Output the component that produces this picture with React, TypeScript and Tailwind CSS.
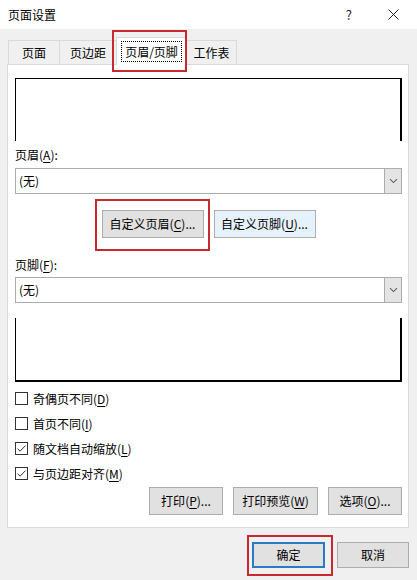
import React from "react";

const font = { fontFamily: '"Noto Sans CJK SC", "Noto Sans", sans-serif' };

function Key({ k }: { k: string }) {
  return (
    <>
      (<span className="underline underline-offset-2">{k}</span>)
    </>
  );
}

function Select() {
  return (
    <div className="flex h-[26px] w-full border border-[#acacac] bg-white">
      <div className="flex flex-1 items-center pl-[3px] text-[12px] text-black">(无)</div>
      <div className="flex w-[17px] items-center justify-center border-l border-[#acacac] bg-[#e4e4e4]">
        <svg width="9" height="6" viewBox="0 0 9 6" fill="none">
          <path d="M1 1.2L4.5 4.6L8 1.2" stroke="#606060" strokeWidth="1.1" />
        </svg>
      </div>
    </div>
  );
}

function Btn({
  children,
  w,
  className = "",
}: {
  children: React.ReactNode;
  w: string;
  className?: string;
}) {
  return (
    <div
      className={`flex h-[28px] items-center justify-center border border-[#adadad] bg-[#e1e1e1] text-[12px] text-black ${w} ${className}`}
    >
      {children}
    </div>
  );
}

function Check({ checked, children }: { checked?: boolean; children: React.ReactNode }) {
  return (
    <div className="flex h-[25px] items-center gap-[5px]">
      <div className="flex h-[13px] w-[13px] items-center justify-center border border-[#333333] bg-white">
        {checked && (
          <svg width="11" height="11" viewBox="0 0 11 11" fill="none">
            <path d="M1.5 5.6L4.1 8.2L9.5 2.6" stroke="#333333" strokeWidth="1" />
          </svg>
        )}
      </div>
      <span className="text-[12px] text-black">{children}</span>
    </div>
  );
}

export default function App() {
  return (
    <div style={font} className="h-[580px] w-[417px] overflow-hidden bg-[#f0f0f0] text-black">
      {/* title bar */}
      <div className="flex h-[29px] items-center bg-white pl-[8px]">
        <span className="text-[12px]">页面设置</span>
        <span className="ml-auto mr-[36px] text-[13px] text-[#222]">?</span>
        <svg className="mr-[18px]" width="11" height="11" viewBox="0 0 11 11" fill="none">
          <path d="M0.5 0.5L10.5 10.5M10.5 0.5L0.5 10.5" stroke="#222" strokeWidth="1" />
        </svg>
      </div>

      {/* tabs */}
      <div className="mt-[8px] flex h-[27px] items-end pl-[8px]">
        <div className="flex h-[24px] w-[51px] items-center justify-center border-l border-t border-[#d9d9d9] text-[12px]">
          页面
        </div>
        <div className="flex h-[24px] w-[57px] items-center justify-center border-l border-t border-[#d9d9d9] text-[12px]">
          页边距
        </div>
        <div className="relative z-10 -mb-px flex h-[28px] w-[71px] items-center justify-center border-l border-r border-t border-[#d9d9d9] bg-white text-[12px]">
          <span className="border border-dotted border-black px-[3px] leading-[19px]">页眉/页脚</span>
          <span className="absolute -bottom-[7px] -left-[5px] -right-px -top-[8px] border-2 border-[#c62a2e]" />
        </div>
        <div className="flex h-[24px] w-[50px] items-center justify-center border-r border-t border-[#d9d9d9] text-[12px]">
          工作表
        </div>
      </div>

      {/* panel */}
      <div className="ml-[7px] flex h-[464px] w-[402px] flex-col border border-[#d9d9d9] bg-white pl-[7px] pr-[6px] pt-[13px]">
        <div className="h-[63px] w-full border-l border-t border-r-2 border-black" />

        <div className="mt-[6px] text-[12px] leading-[16px]">
          页眉<Key k="A" />:
        </div>
        <div className="mt-[5px]">
          <Select />
        </div>

        <div className="mt-[16px] flex justify-center gap-[10px]">
          <div className="relative">
            <Btn w="w-[102px]" className="border-[#adadad]">
              自定义页眉<Key k="C" />...
            </Btn>
            <span className="absolute -bottom-[13px] -left-[7px] -right-[6px] -top-[11px] border-2 border-[#c62a2e]" />
          </div>
          <Btn w="w-[102px]" className="border-[#3d8fc0] bg-[#e5f1fb]">
            自定义页脚<Key k="U" />...
          </Btn>
        </div>

        <div className="mt-[19px] text-[12px] leading-[16px]">
          页脚<Key k="F" />:
        </div>
        <div className="mt-[4px]">
          <Select />
        </div>

        <div className="mt-[15px] h-[64px] w-full border-b-2 border-l border-r-2 border-black" />

        <div className="mt-[4px] flex flex-col">
          <Check>
            奇偶页不同<Key k="D" />
          </Check>
          <Check>
            首页不同<Key k="I" />
          </Check>
          <Check checked>
            随文档自动缩放<Key k="L" />
          </Check>
          <Check checked>
            与页边距对齐<Key k="M" />
          </Check>
        </div>

        <div className="mt-[1px] flex justify-end gap-[10px]">
          <Btn w="w-[74px]">
            打印<Key k="P" />...
          </Btn>
          <Btn w="w-[85px]">
            打印预览<Key k="W" />
          </Btn>
          <Btn w="w-[74px]">
            选项<Key k="O" />...
          </Btn>
        </div>
      </div>

      {/* footer buttons */}
      <div className="mr-[8px] mt-[14px] flex justify-end gap-[12px]">
        <div className="relative">
          <div className="flex h-[26px] w-[73px] items-center justify-center border-2 border-[#2a7ac4] bg-[#e1e1e1] text-[12px]">
            确定
          </div>
          <span className="absolute -bottom-[8px] -left-[5px] -right-[8px] -top-[7px] border-2 border-[#c62a2e]" />
        </div>
        <div className="flex h-[26px] w-[72px] items-center justify-center border border-[#adadad] bg-[#e1e1e1] text-[12px]">
          取消
        </div>
      </div>
    </div>
  );
}
